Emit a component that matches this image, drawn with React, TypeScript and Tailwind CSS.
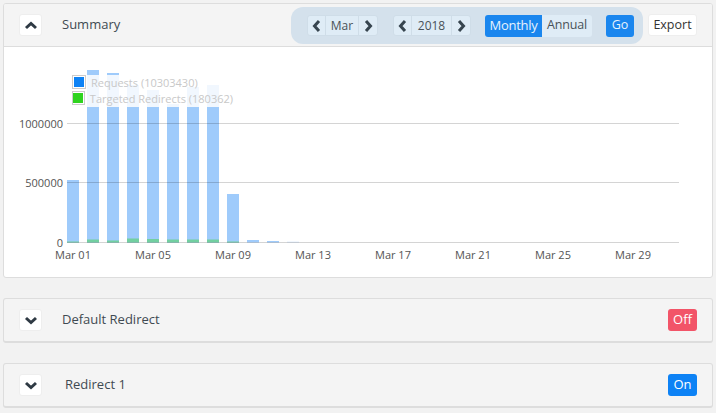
import React from "react";

const Chevron = ({ dir, className }: { dir: "up" | "down" | "left" | "right"; className?: string }) => {
  const points = {
    up: "2,8 7,3.5 12,8",
    down: "2,3 7,7.5 12,3",
    left: "8,2 3.5,7 8,12",
    right: "4,2 8.5,7 4,12",
  }[dir];
  const vertical = dir === "up" || dir === "down";
  return (
    <svg
      width={vertical ? 14 : 12}
      height={vertical ? 11 : 14}
      viewBox={vertical ? "0 0 14 11" : "0 0 12 14"}
      className={className}
    >
      <polyline points={points} fill="none" stroke="currentColor" strokeWidth="3" />
    </svg>
  );
};

const Stepper = ({ label, w }: { label: string; w: string }) => (
  <div className="flex h-[21px] items-stretch rounded-[3px] border border-[#cfdde8] bg-[#dfecf6] text-[#4a5258]">
    <div className="flex w-[18px] items-center justify-center border-r border-[#cfdde8] text-[#37454f]">
      <Chevron dir="left" />
    </div>
    <div className={`flex items-center justify-center border-r border-[#cfdde8] ${w}`}>{label}</div>
    <div className="flex w-[18px] items-center justify-center text-[#37454f]">
      <Chevron dir="right" />
    </div>
  </div>
);

const ToggleBtn = ({ dir }: { dir: "up" | "down" }) => (
  <button className="flex h-[22px] w-[23px] items-center justify-center rounded-[3px] border border-[#eeeeee] bg-white text-[#2f3a44]">
    <Chevron dir={dir} />
  </button>
);

const bars = [
  { top: 180, green: 1 },
  { top: 70, green: 3 },
  { top: 73, green: 2 },
  { top: 85, green: 4 },
  { top: 90, green: 3.5 },
  { top: 104, green: 3 },
  { top: 87, green: 3 },
  { top: 85, green: 3 },
  { top: 194, green: 1 },
  { top: 240, green: 0 },
  { top: 241, green: 0 },
  { top: 241.6, green: 0 },
];

const yLabels = [
  { y: 123.5, t: "1000000" },
  { y: 182.5, t: "500000" },
  { y: 242.5, t: "0" },
];
const xLabels = [
  ["Mar 01", 73],
  ["Mar 05", 153],
  ["Mar 09", 233],
  ["Mar 13", 313],
  ["Mar 17", 393],
  ["Mar 21", 473],
  ["Mar 25", 553],
  ["Mar 29", 633],
] as const;

const CHART_TOP = 47;

const Chart = () => (
  <svg width="708" height="230" viewBox={`4 ${CHART_TOP} 708 230`} className="block">
    {bars.map((b, i) => (
      <g key={i}>
        <rect x={67 + i * 20} y={b.top} width="12" height={242.5 - b.top} fill={i === 11 ? "#dcebfd" : "#9fcbfb"} />
        {b.green > 0 && (
          <rect x={67 + i * 20} y={242.5 - b.green} width="12" height={b.green} fill="#72cfa0" />
        )}
      </g>
    ))}
    {yLabels.map((l) => (
      <g key={l.t}>
        <line x1="67" x2="679" y1={l.y} y2={l.y} stroke="#000" strokeOpacity="0.17" strokeWidth="1" />
        <text x="63" y={l.y + 4} textAnchor="end" fontSize="11" fill="#545454" fontFamily="'Open Sans', sans-serif">
          {l.t}
        </text>
      </g>
    ))}
    {xLabels.map(([t, x]) => (
      <text key={t} x={x} y="259" textAnchor="middle" fontSize="11" fill="#545454" fontFamily="'Open Sans', sans-serif">
        {t}
      </text>
    ))}
  </svg>
);

const Legend = () => (
  <div className="absolute left-[68px] top-[28px] flex h-[32px] w-[161px] flex-col gap-[2px] bg-white/85 text-[11px] leading-[15px] text-[#c8c8c8]">
    {[
      ["Requests (10303430)", "bg-[#0d82f5]"],
      ["Targeted Redirects (180362)", "bg-[#2fd31f]"],
    ].map(([t, c]) => (
      <div key={t} className="flex h-[14px] items-center gap-[5px] whitespace-nowrap">
        <span className="flex h-[14px] w-[14px] items-center justify-center border border-[#cccccc] bg-white">
          <span className={`block h-[10px] w-[10px] ${c}`} />
        </span>
        <span>{t}</span>
      </div>
    ))}
  </div>
);

const SimplePanel = ({
  title,
  titleClass,
  badge,
  badgeClass,
  mt,
}: {
  title: string;
  titleClass: string;
  badge: string;
  badgeClass: string;
  mt: string;
}) => (
  <section
    className={`flex h-[45px] items-center rounded-[3px] border border-b-[2px] border-[#dddddd] bg-[#f4f4f4] pl-[15px] pr-[15px] ${mt}`}
  >
    <ToggleBtn dir="down" />
    <span className={`text-[13px] text-[#3f4a52] ${titleClass}`}>{title}</span>
    <span
      className={`ml-auto flex h-[22px] w-[29px] items-center justify-center rounded-[3px] text-[13px] text-white ${badgeClass}`}
    >
      {badge}
    </span>
  </section>
);

export default function App() {
  return (
    <div className="h-[413px] w-[716px] overflow-hidden bg-[#f2f2f2] px-[3px] pt-[3px] font-['Open_Sans',sans-serif]">
      <section className="overflow-hidden rounded-[3px] border border-[#dddddd] bg-white">
        <header className="flex h-[43px] items-center border-b border-[#dddddd] bg-[#f4f4f4] pl-[15px] pr-[15px] text-[12px]">
          <ToggleBtn dir="up" />
          <span className="ml-[20px] text-[13px] text-[#3f4a52]">Summary</span>
          <div className="ml-auto flex h-[37px] w-[352px] items-center rounded-[12px] bg-[#d4e1ec] pl-[16px] pt-[1px]">
            <Stepper label="Mar" w="w-[33px]" />
            <div className="w-[15px]" />
            <Stepper label="2018" w="w-[40px]" />
            <div className="flex h-[22px] items-stretch pl-[14px]">
              <span className="flex w-[57px] items-center justify-center rounded-l-[3px] bg-[#1a86ee] text-[13px] tracking-[-0.3px] text-[#e6f2fd]">
                Monthly
              </span>
              <span className="flex w-[50px] items-center justify-center rounded-r-[3px] bg-[#dfecf6] text-[12.5px] tracking-[-0.2px] text-[#4a5258]">
                Annual
              </span>
            </div>
            <span className="ml-[14px] flex h-[22px] w-[28px] items-center justify-center rounded-[3px] bg-[#1a86ee] text-[12.5px] text-[#e6f2fd]">
              Go
            </span>
          </div>
          <button className="ml-[5px] flex h-[22px] w-[49px] items-center justify-center rounded-[3px] border border-[#eeeeee] bg-white text-[12.5px] text-[#333333]">
            Export
          </button>
        </header>
        <div className="relative">
          <Chart />
          <Legend />
        </div>
      </section>
      <SimplePanel
        title="Default Redirect"
        titleClass="ml-[20px]"
        badge="Off"
        badgeClass="bg-[#f25468]"
        mt="mt-[20px]"
      />
      <SimplePanel
        title="Redirect 1"
        titleClass="ml-[23px]"
        badge="On"
        badgeClass="bg-[#0d82f5]"
        mt="mt-[20px]"
      />
    </div>
  );
}
